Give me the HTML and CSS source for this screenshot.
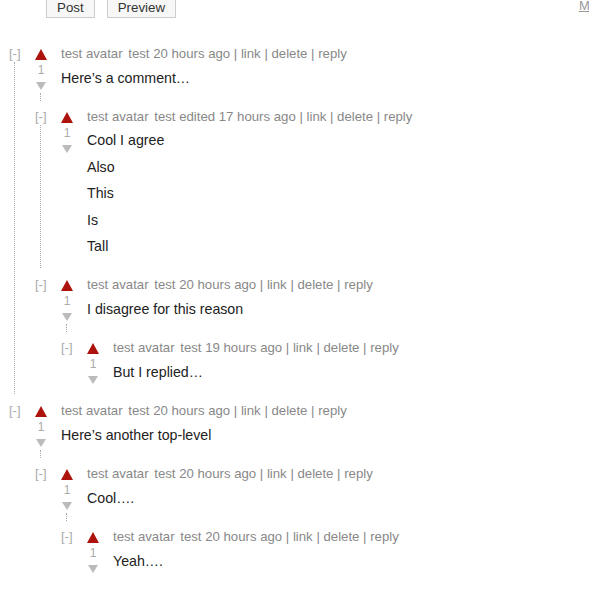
FILE: index.html
```
<!DOCTYPE html>
<html>
<head>
<meta charset="utf-8">
<link rel="stylesheet" href="styles.css">
</head>
<body>
<div class="top">
  <button class="btn">Post</button>
  <button class="btn">Preview</button>
  <a class="md" href="#">Markdown formatting available</a>
</div>

<ol class="comments tree">
  <li class="c">
    <div class="folder"><span class="fold">[-]</span><span class="thread"></span></div>
    <div class="voters"><span class="up"></span><span class="score">1</span><span class="down"></span><span class="stub"></span></div>
    <div class="details">
      <div class="byline"><span class="avatar">test avatar</span> <a href="#">test</a> 20 hours ago | <a href="#">link</a> | <a href="#">delete</a> | <a href="#">reply</a></div>
      <div class="text"><p>Here’s a comment…</p></div>
    </div>
    <ol class="comments sub">
      <li class="c">
        <div class="folder"><span class="fold">[-]</span><span class="thread"></span></div>
        <div class="voters"><span class="up"></span><span class="score">1</span><span class="down"></span></div>
        <div class="details">
          <div class="byline"><span class="avatar">test avatar</span> <a href="#">test</a> edited 17 hours ago | <a href="#">link</a> | <a href="#">delete</a> | <a href="#">reply</a></div>
          <div class="text"><p>Cool I agree</p><p>Also</p><p>This</p><p>Is</p><p>Tall</p></div>
        </div>
      </li>
      <li class="c">
        <div class="folder"><span class="fold">[-]</span></div>
        <div class="voters"><span class="up"></span><span class="score">1</span><span class="down"></span><span class="stub"></span></div>
        <div class="details">
          <div class="byline"><span class="avatar">test avatar</span> <a href="#">test</a> 20 hours ago | <a href="#">link</a> | <a href="#">delete</a> | <a href="#">reply</a></div>
          <div class="text"><p>I disagree for this reason</p></div>
        </div>
        <ol class="comments sub">
          <li class="c">
            <div class="folder"><span class="fold">[-]</span></div>
            <div class="voters"><span class="up"></span><span class="score">1</span><span class="down"></span></div>
            <div class="details">
              <div class="byline"><span class="avatar">test avatar</span> <a href="#">test</a> 19 hours ago | <a href="#">link</a> | <a href="#">delete</a> | <a href="#">reply</a></div>
              <div class="text"><p>But I replied…</p></div>
            </div>
          </li>
        </ol>
      </li>
    </ol>
  </li>
  <li class="c">
    <div class="folder"><span class="fold">[-]</span></div>
    <div class="voters"><span class="up"></span><span class="score">1</span><span class="down"></span><span class="stub"></span></div>
    <div class="details">
      <div class="byline"><span class="avatar">test avatar</span> <a href="#">test</a> 20 hours ago | <a href="#">link</a> | <a href="#">delete</a> | <a href="#">reply</a></div>
      <div class="text"><p>Here’s another top-level</p></div>
    </div>
    <ol class="comments sub">
      <li class="c">
        <div class="folder"><span class="fold">[-]</span></div>
        <div class="voters"><span class="up"></span><span class="score">1</span><span class="down"></span><span class="stub"></span></div>
        <div class="details">
          <div class="byline"><span class="avatar">test avatar</span> <a href="#">test</a> 20 hours ago | <a href="#">link</a> | <a href="#">delete</a> | <a href="#">reply</a></div>
          <div class="text"><p>Cool….</p></div>
        </div>
        <ol class="comments sub">
          <li class="c">
            <div class="folder"><span class="fold">[-]</span></div>
            <div class="voters"><span class="up"></span><span class="score">1</span><span class="down"></span></div>
            <div class="details">
              <div class="byline"><span class="avatar">test avatar</span> <a href="#">test</a> 20 hours ago | <a href="#">link</a> | <a href="#">delete</a> | <a href="#">reply</a></div>
              <div class="text"><p>Yeah….</p></div>
            </div>
          </li>
        </ol>
      </li>
    </ol>
  </li>
</ol>
</body>
</html>
```
FILE: styles.css
```
html, body {
  margin: 0;
  overflow: hidden;
}
body {
  font-family: "Liberation Sans", Arial, sans-serif;
  color: #333;
  background: #fff;
}
.top {
  display: flex;
  align-items: flex-start;
  gap: 12px;
  margin-top: -2px;
  padding-left: 46px;
}
.btn {
  font: 13.333px/16px "Liberation Sans", Arial, sans-serif;
  color: #333;
  padding: 1px 10px;
  border: 1px solid #ccc;
  border-radius: 0;
  background: #f7f7f7;
}
.md {
  margin-left: auto;
  width: 10px;
  white-space: nowrap;
  font-size: 13px;
  line-height: 16px;
  color: #999;
  text-decoration: underline;
}
.comments {
  list-style: none;
  margin: 0;
  padding: 0;
}
.tree {
  margin-top: 28px;
  padding-left: 9px;
}
.c {
  display: grid;
  grid-template-columns: 26px 26px 1fr;
}
.c + .c {
  margin-top: 15px;
}
.folder {
  grid-column: 1;
  grid-row: 1 / span 2;
  display: flex;
  flex-direction: column;
}
.fold {
  font-size: 13px;
  line-height: 16px;
  color: #aaa;
}
.thread {
  flex: 1;
  margin-left: 5px;
  margin-bottom: -6px;
  border-left: 1px dotted #aaa;
}
.voters {
  grid-column: 2;
  grid-row: 1;
  width: 12px;
  display: flex;
  flex-direction: column;
  align-items: center;
}
.up {
  width: 0;
  height: 0;
  margin-top: 3px;
  border-left: 6px solid transparent;
  border-right: 6px solid transparent;
  border-bottom: 11px solid #ac130d;
}
.score {
  margin-top: 3px;
  font-size: 12px;
  line-height: 14px;
  color: #aaa;
}
.down {
  width: 0;
  height: 0;
  margin-top: 5px;
  border-left: 5px solid transparent;
  border-right: 5px solid transparent;
  border-top: 8px solid #bbb;
}
.stub {
  align-self: flex-start;
  margin-left: 5px;
  margin-top: 3px;
  margin-bottom: -11px;
  height: 8px;
  border-left: 1px dotted #aaa;
}
.details {
  grid-column: 3;
  grid-row: 1;
  min-width: 0;
}
.byline {
  font-size: 13.2px;
  line-height: 16px;
  color: #888;
}
.byline a {
  color: #888;
  text-decoration: none;
}
.avatar {
  margin-right: 2px;
}
.text {
  margin-top: 5.5px;
  font-size: 14.2px;
  color: #222;
}
.text p {
  margin: 0 0 6px;
  line-height: 20.4px;
}
.sub {
  grid-column: 2 / span 2;
  grid-row: 2;
  margin-top: 15px;
}
```
